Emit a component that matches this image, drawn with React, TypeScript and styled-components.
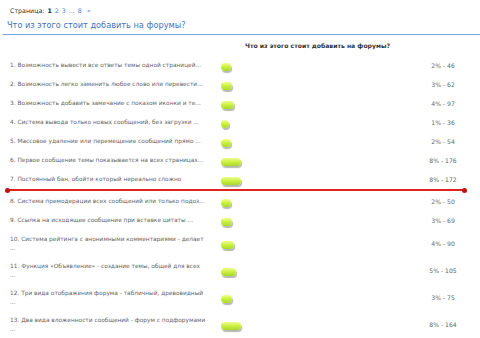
import React from "react";
import styled, { createGlobalStyle } from "styled-components";

const Global = createGlobalStyle`
  html, body { margin: 0; padding: 0; background: #ffffff; }
  body { font-family: "DejaVu Sans", Verdana, sans-serif; }
`;

const Page = styled.div`
  width: 480px;
  height: 338px;
  overflow: hidden;
  background: #fff;
`;

const Pager = styled.div`
  display: flex;
  align-items: center;
  gap: 3px;
  padding: 6px 0 0 10px;
  height: 9px;
  font-size: 6.3px;
  color: #333;
`;

const PageLink = styled.span<{ $current?: boolean }>`
  color: ${(p) => (p.$current ? "#222" : "#4a7fcf")};
  font-weight: ${(p) => (p.$current ? "bold" : "normal")};
`;

const Title = styled.div`
  margin: 4px 0 0 3px;
  padding: 0 0 3px 4px;
  font-size: 8.2px;
  line-height: 12px;
  color: #3e73bf;
  border-bottom: 1px solid #7ea3d9;
`;

const Table = styled.div`
  display: flex;
  flex-direction: column;
  padding-left: 10px;
`;

const HeaderRow = styled.div`
  display: grid;
  grid-template-columns: 205px 205px 46px;
  height: 21px;
  align-items: center;
`;

const HeaderCell = styled.div`
  grid-column: 2;
  text-align: center;
  font-size: 6.1px;
  font-weight: bold;
  color: #333;
`;

const Row = styled.div<{ $tall?: boolean }>`
  display: grid;
  grid-template-columns: 205px 205px 46px;
  height: ${(p) => (p.$tall ? 27 : 19)}px;
  align-items: center;
`;

const Label = styled.div`
  font-size: 5.85px;
  line-height: 9px;
  color: #666;
  white-space: nowrap;
`;

const BarCell = styled.div`
  display: flex;
  align-items: center;
  padding: 2px 0 0 6px;
`;

const Bar = styled.div`
  height: 8px;
  border-radius: 4px;
  background: linear-gradient(to bottom, #efff92 0%, #cdf243 45%, #a8d82a 100%);
  box-shadow: 1px 2px 1px rgba(70, 80, 60, 0.4);
`;

const Value = styled.div`
  text-align: center;
  font-size: 6.1px;
  color: #666;
`;

const Marker = styled.div`
  position: relative;
  height: 2px;
  margin: 0 0 1px -4px;
  width: 460px;
  background: #e0231d;
  &::before,
  &::after {
    content: "";
    position: absolute;
    top: -1.5px;
    width: 5px;
    height: 5px;
    border-radius: 50%;
    background: #c0100c;
  }
  &::before { left: -1px; }
  &::after { right: -1px; }
`;

type Item = { text: string; pct: number; votes: number; more?: boolean };

const items: Item[] = [
  { text: "1. Возможность вывести все ответы темы одной страницей...", pct: 2, votes: 46 },
  { text: "2. Возможность легко заменить любое слово или перевести...", pct: 3, votes: 62 },
  { text: "3. Возможность добавить замечание с показом иконки и те...", pct: 4, votes: 97 },
  { text: "4. Система вывода только новых сообщений, без загрузки ...", pct: 1, votes: 36 },
  { text: "5. Массовое удаление или перемещение сообщений прямо ...", pct: 2, votes: 54 },
  { text: "6. Первое сообщение темы показывается на всех страницах...", pct: 8, votes: 176 },
  { text: "7. Постоянный бан, обойти который нереально сложно", pct: 8, votes: 172 },
  { text: "8. Система премодерации всех сообщений или только подоз...", pct: 2, votes: 50 },
  { text: "9. Ссылка на исходящее сообщение при вставке цитаты ...", pct: 3, votes: 69 },
  { text: "10. Система рейтинга с анонимными комментариями - делает", pct: 4, votes: 90, more: true },
  { text: "11. Функция «Объявление» - создание темы, общей для всех", pct: 5, votes: 105, more: true },
  { text: "12. Три вида отображения форума - табличный, древовидный", pct: 3, votes: 75, more: true },
  { text: "13. Два вида вложенности сообщений - форум с подфорумами", pct: 8, votes: 164, more: true },
];

export default function App() {
  return (
    <Page>
      <Global />
      <Pager>
        <span>Страница:</span>
        <PageLink $current>1</PageLink>
        <PageLink>2</PageLink>
        <PageLink>3</PageLink>
        <PageLink>...</PageLink>
        <PageLink>8</PageLink>
        <PageLink>&nbsp;»</PageLink>
      </Pager>
      <Title>Что из этого стоит добавить на форумы?</Title>
      <Table>
        <HeaderRow>
          <HeaderCell>Что из этого стоит добавить на форумы?</HeaderCell>
        </HeaderRow>
        {items.map((it, i) => (
          <React.Fragment key={i}>
            <Row $tall={it.more}>
              <Label>
                {it.text}
                {it.more && (
                  <>
                    <br />
                    ...
                  </>
                )}
              </Label>
              <BarCell>
                <Bar style={{ width: `${6 + it.pct * 1.75}px` }} />
              </BarCell>
              <Value>
                {it.pct}% - {it.votes}
              </Value>
            </Row>
            {i === 6 && <Marker />}
          </React.Fragment>
        ))}
      </Table>
    </Page>
  );
}
